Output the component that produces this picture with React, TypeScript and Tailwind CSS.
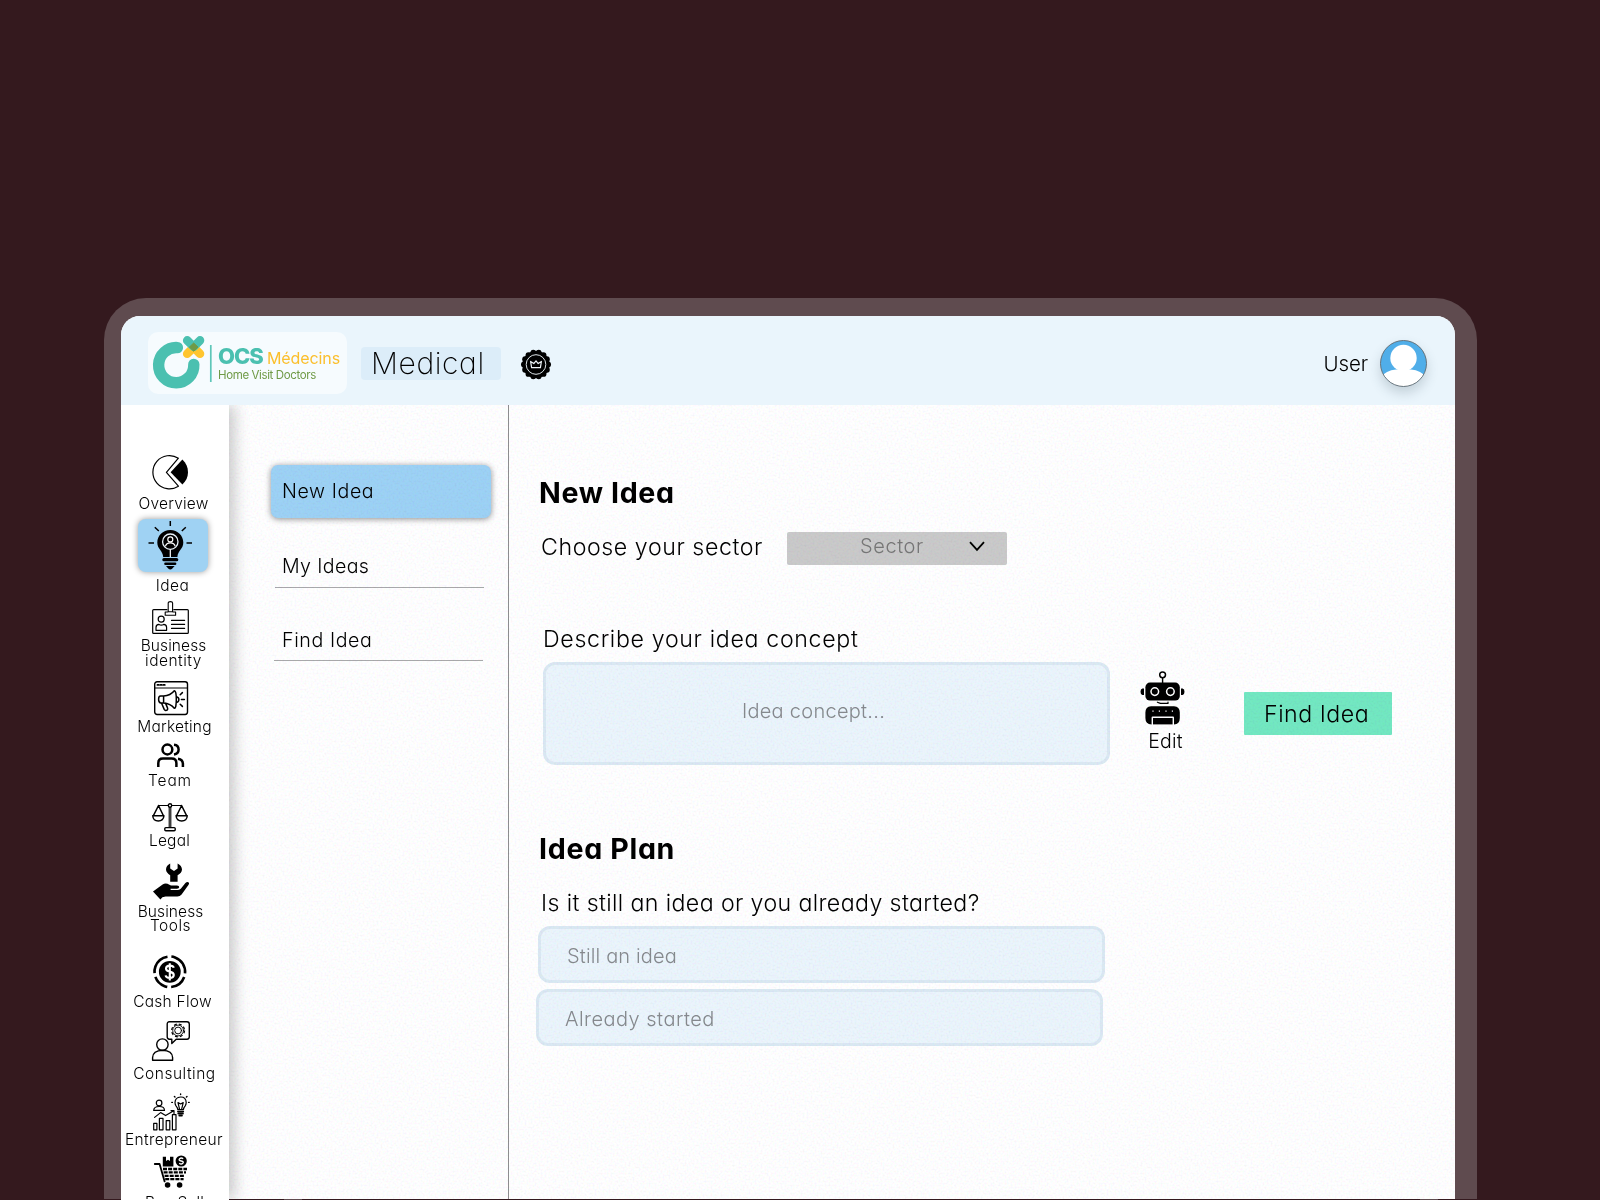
import type { ReactNode } from "react";

const line = { fill: "none", stroke: "#000", strokeWidth: 1.2, strokeLinecap: "round", strokeLinejoin: "round" } as const;

function Icon({ w, h, className = "", children }: { w: number; h: number; className?: string; children: ReactNode }) {
  return (
    <svg width={w} height={h} viewBox={`0 0 ${w} ${h}`} className={`block shrink-0 overflow-visible ${className}`}>
      {children}
    </svg>
  );
}

const PieIcon = () => (
  <Icon w={37} h={34}>
    <path {...line} d="M26.4 3.2A16.6 16.6 0 1 0 26.4 31.2L14.4 17.3Z" />
    <path d="M30.4 4.6C34 8 36 12.4 36 17.2S34 26 30.4 29.6L18.6 17.2Z" />
  </Icon>
);

const BulbIcon = () => (
  <Icon w={44} h={49} className="-translate-x-[3px]">
    <path {...line} strokeWidth={1.5} strokeLinecap="butt" d="M22.3 0V5M6.8 6.3L10.8 10M37.8 6.3L33.8 10M.5 22H6M38.5 22H44" />
    <path d="M22.3 9C14.8 9 9.3 14.7 9.3 21.6C9.3 28.3 14.8 29.6 15.2 36H29.4C29.8 29.6 35.3 28.3 35.3 21.6C35.3 14.7 29.8 9 22.3 9Z" />
    <circle cx="22.3" cy="20.7" r="7.7" fill="none" stroke="#e8f3fb" strokeWidth="1.3" />
    <circle cx="22.3" cy="18.4" r="2.5" fill="none" stroke="#fff" strokeWidth="1.2" />
    <path d="M17.4 25.3C18 22.9 20 21.8 22.3 21.8S26.6 22.9 27.2 25.3M22.3 28.5V36" fill="none" stroke="#fff" strokeWidth="1.2" />
    <rect x="14.3" y="36.9" width="16" height="3.4" rx="1.6" />
    <rect x="16.2" y="41.4" width="12.2" height="2.6" rx="1.3" />
    <path d="M18 45H26.6L24.4 47.4Q22.3 49.6 20.2 47.4Z" />
  </Icon>
);

const IdCardIcon = () => (
  <Icon w={37} h={33}>
    <path {...line} d="M15 8.7H1.6Q.7 8.7.7 9.6V31.4Q.7 32.3 1.6 32.3H35.4Q36.3 32.3 36.3 31.4V9.6Q36.3 8.7 35.4 8.7H21.8" />
    <path {...line} strokeWidth={1.1} d="M16.2 10.8V2Q16.2.6 18.4.6T20.6 2V10.8ZM15.8 11H13.2V14.3H23.6V11H21" />
    <circle {...line} cx="9.2" cy="18.2" r="3" />
    <path {...line} d="M4 29.3V26.4Q4 23.6 7 23.4Q9.2 24.8 11.6 23.4Q14.6 23.6 14.6 26.4V29.3ZM19.5 19.4H32.6M19.5 23.4H32.6M19.5 27.4H32.6" />
  </Icon>
);

const MegaphoneIcon = () => (
  <Icon w={34} h={34}>
    <rect {...line} strokeWidth={1.4} x=".7" y=".7" width="32.8" height="32.8" rx="2.4" />
    <path {...line} d="M.7 7H33.5" />
    <path d="M3.4 3.9H4.8M6.4 3.9H7.8M9.4 3.9H10.8" stroke="#000" strokeWidth="1.7" strokeLinecap="round" />
    <g {...line} strokeWidth={1.5}>
      <path d="M9.6 15H6.6Q4.6 15 4.6 18.2T6.6 22H9.6ZM9.6 15Q16.5 14.6 20.3 9.8Q22.3 9.6 22.3 18.6T20.3 27.2Q16.5 22.6 9.6 22M7.6 22.2L10.2 28.4Q11.4 30.2 13.4 28.8Q14 28 13.4 26.6L11.6 22.4M22.4 15.8Q24.9 16.2 24.9 18.6T22.4 21.4" />
      <path d="M26.2 13.8L28.4 11.6M27.4 18.6H30.4M26.2 23.2L28.4 25.4" />
    </g>
  </Icon>
);

const TeamIcon = () => (
  <Icon w={28} h={24} className="translate-x-px">
    <g {...line} strokeWidth={2.5} strokeLinecap="butt">
      <circle cx="10.4" cy="6.5" r="4.9" />
      <path d="M17 1.7C19.8 2 21.6 3.8 21.6 6.5S19.8 11 17 11.4M1.3 24V20.2Q1.3 15.6 6 15.6H14.6Q19.4 15.6 19.4 20.2V24M21 15.7Q25.9 16.4 25.9 21V24" />
    </g>
  </Icon>
);

const ScalesIcon = () => (
  <Icon w={36} h={30}>
    <g {...line} strokeWidth={1.4}>
      <circle cx="18" cy="2.5" r="1.7" />
      <path d="M16.3 2.5H6.5M19.7 2.5H29.6M17.2 4.4V24.5M18.8 4.4V24.5" strokeWidth="1.1" />
      <rect x="12.8" y="24.6" width="10.4" height="3.2" rx="1" />
      <path d="M6.5 2.6L1.4 12.6M6.5 2.6L11.4 12.6M.7 12.7H12Q11.4 18 6.3 18T.7 12.7ZM29.6 2.6L24.6 12.6M29.6 2.6L34.6 12.6M24 12.7H35.3Q34.8 18 29.7 18T24 12.7Z" />
    </g>
  </Icon>
);

const HandToolIcon = () => (
  <Icon w={36} h={36}>
    <path d="M17.2.4Q13 2.4 13 6.6Q13.2 10 17.2 12.2V18.8H24.6V12.2Q28.8 10.2 29 6.6Q28.8 2.4 24.6.4V5.6L21 8L17.2 5.6Z" />
    <path d="M0 28.6L9.6 21.4Q13 19.6 16.4 21.8L18 22.6H24Q26.4 22.8 26.2 24.2T24 25.8H17.6V27H25Q27 26.8 28 25.4L32.4 20Q34 18.4 35.4 19.2T35.6 21.8L28.6 31.4Q27 33.4 24.4 33.4H12.6L9.4 34.2L7.4 36.4Z" />
  </Icon>
);

const CashIcon = () => (
  <Icon w={34} h={34}>
    <circle cx="16.8" cy="16.8" r="10.9" />
    <circle cx="16.8" cy="16.8" r="15.3" fill="none" stroke="#000" strokeWidth="2.6" pathLength="100" strokeDasharray="18 4 17 4 24 4 25 4" transform="rotate(20 16.8 16.8)" />
    <path d="M20.8 12.8Q20.2 10.6 16.8 10.6T13 13.4Q13 15.8 16.8 16.6T20.8 20Q20.6 23 16.8 23T12.6 20.4M16.8 8.2V25.4" fill="none" stroke="#fff" strokeWidth="2.1" />
  </Icon>
);

const ConsultIcon = () => (
  <Icon w={38} h={40} className="translate-x-px">
    <g {...line} strokeWidth={1.4}>
      <path d="M17.4.8H35Q37.3.8 37.3 3.2V15.8Q37.3 18.2 35 18.2H24.2L19.8 22.6V18.2H17.4Q15.2 18.2 15.2 15.8V3.2Q15.2.8 17.4.8Z" />
      <circle cx="26.1" cy="9.5" r="6.4" strokeWidth="1.3" strokeDasharray="2.9 2.13" strokeLinecap="butt" />
      <circle cx="26.1" cy="9.5" r="5.4" strokeWidth=".9" />
      <circle cx="26.1" cy="9.5" r="3.4" strokeWidth="1" />
      <circle cx="10.4" cy="23.6" r="5.7" />
      <path d="M.6 39.3V36.6Q.8 29.6 10.6 29.4Q20.4 29.6 20.6 36.6V39.3Z" />
    </g>
  </Icon>
);

const EntrepreneurIcon = () => (
  <Icon w={36} h={37}>
    <g {...line} strokeWidth={1.2}>
      <circle cx="6.1" cy="9" r="2.8" />
      <path d="M.7 16.4Q.8 12.6 6.1 12.5T11.5 16.4ZM1.6 23.4L7.6 18.6L12.6 21.6L20.4 17M18 16.6H21V19.4M.7 29.4H3.9V35.8H.7ZM6.4 24.4H10V35.8H6.4ZM13.2 26.6H16.8V35.8H13.2ZM19.4 20.6H23V35.8H19.4Z" />
      <path d="M24.8 15.6Q24.6 13.6 23 11.8Q22 10.4 22 8.6Q22.2 3.2 27.6 3T33.2 8.6Q33.2 10.4 32.2 11.8Q30.6 13.6 30.4 15.6ZM26.6 15.4L25 8.6L27.6 10L30.2 8.6L28.6 15.4" />
      <path d="M24.9 17.6H30.3M25.2 19.6H30M26.2 21.6H29" strokeWidth="1.7" />
      <path d="M27.6 0V.6M21.4 2.4L22 3M34 2.4L33.4 3M18.8 8.4H19.4M35.6 8.4H36.2" strokeWidth="1.4" />
    </g>
  </Icon>
);

const CartIcon = () => (
  <Icon w={34} h={33}>
    <path {...line} strokeWidth={1.8} d="M.8 9H5.6L10.6 26.4" />
    <path d="M8.8 1.8H12V6L14 4.8L16 6V1.8H19.4V11.6H8.8Z" />
    <circle cx="27.2" cy="6" r="5.6" />
    <path d="M29.2 3.8Q27.2 2.2 25.6 3.8T27.2 6T28.8 8.2T25.2 8.2" fill="none" stroke="#fff" strokeWidth="1.3" />
    <path d="M9 14H33M9.6 17.4H32M10.6 20.8H31M11.2 24.2H29.6" stroke="#000" strokeWidth="2.3" strokeDasharray="4 1.1" />
    <circle cx="13.6" cy="30" r="2.8" />
    <circle cx="25.6" cy="30" r="2.8" />
  </Icon>
);

const RobotIcon = () => (
  <Icon w={45} h={54}>
    <circle {...line} strokeWidth={1.5} cx="22.6" cy="3.8" r="2.9" />
    <path {...line} strokeWidth={1.4} d="M22.6 6.8V12" />
    <rect x="5.4" y="11.6" width="34.4" height="18" rx="4.6" />
    <path d="M4 17.6V24H2.4Q.5 23.6.5 20.8T2.4 17.6ZM41 17.6V24H42.6Q44.5 23.6 44.5 20.8T42.6 17.6Z" />
    <circle cx="14.8" cy="20.6" r="3.8" fill="none" stroke="#fff" strokeWidth="1.5" />
    <circle cx="30.4" cy="20.6" r="3.8" fill="none" stroke="#fff" strokeWidth="1.5" />
    <path {...line} strokeWidth={1.2} d="M17.4 31.2L20.4 32.4H28V31" />
    <path d="M11 35.2H34Q39.8 35.4 39.8 41.6V47Q39.8 53.2 34 53.4V46.4Q34 45.4 33 45.4H12.6Q11.6 45.4 11.6 46.4V53.4Q5.4 53.2 5.4 47V41.6Q5.4 35.4 11 35.2Z" />
    <path d="M13 47H32.6V53.4H13Z" />
    <path d="M12.4 40.2H13.6M18.8 40.2H20M25.4 40.2H26.6M31.8 40.2H33" stroke="#fff" strokeWidth="1.3" />
  </Icon>
);

const LogoMark = () => (
  <Icon w={66} h={60}>
    <path d="M29.4 15.6A17.6 17.6 0 1 0 45.8 32.4" fill="none" stroke="#4bc0b0" strokeWidth="11.4" strokeLinecap="round" />
    <path d="M39.2 21.8L45.7 15.4L52 21.8" fill="none" stroke="#ffc52f" strokeWidth="8.6" strokeLinecap="round" strokeLinejoin="round" />
    <path d="M39.2 8.4L45.7 14.8L52 8.4" fill="none" stroke="#4bc0b0" strokeWidth="8.6" strokeLinecap="round" strokeLinejoin="round" />
    <path d="M45.7 11L50 15.1L45.7 19.2L41.4 15.1Z" fill="#6f9a46" stroke="#6f9a46" strokeWidth="1" strokeLinejoin="round" />
    <path d="M62.8 13V50" stroke="#5ec6b8" strokeWidth="1.7" />
  </Icon>
);

const scallops = Array.from({ length: 14 }, (_, i) => {
  const a = (i / 14) * Math.PI * 2;
  return { x: 15 + 12.1 * Math.cos(a), y: 15.5 + 12.1 * Math.sin(a) };
});

const BadgeIcon = () => (
  <Icon w={30} h={31}>
    <circle cx="15" cy="15.5" r="13.6" />
    {scallops.map((p, i) => (
      <circle key={i} cx={p.x} cy={p.y} r="2.9" />
    ))}
    <circle cx="15" cy="15.5" r="9.8" fill="none" stroke="#dfe6ea" strokeWidth="1" />
    <path d="M10.6 18.6L9.6 12.4L12.8 14.6L15 11.8L17.2 14.6L20.4 12.4L19.4 18.6Z" fill="none" stroke="#eef4f8" strokeWidth="1.2" strokeLinejoin="round" />
  </Icon>
);

const Avatar = () => (
  <Icon w={47} h={47} className="rounded-full shadow-[0_6px_12px_rgba(60,80,95,0.22)]">
    <clipPath id="face">
      <circle cx="23.5" cy="23.5" r="23" />
    </clipPath>
    <g clipPath="url(#face)">
      <rect width="47" height="47" fill="#50aee9" />
      <circle cx="23.5" cy="18" r="13.2" fill="#fff" />
      <path d="M0 47V38Q6 30.4 16 29.6H31Q41 30.4 47 38V47Z" fill="#fff" />
    </g>
    <circle cx="23.5" cy="23.5" r="23" fill="none" stroke="#5d666c" strokeWidth="0.9" />
  </Icon>
);

function NavItem({ icon, className, children }: { icon: ReactNode; className: string; children: ReactNode }) {
  return (
    <li className={`flex flex-col items-center ${className}`}>
      {icon}
      {children}
    </li>
  );
}

const label = "whitespace-nowrap text-center text-[15.5px]";

function Sidebar() {
  return (
    <nav className="relative z-10 w-[108px] shrink-0 bg-white shadow-[6px_0_14px_rgba(0,0,0,0.2)]">
      <ul className="flex w-[99px] flex-col items-center">
        <NavItem className="mt-[50px]" icon={<PieIcon />}>
          <span className={`${label} mt-[7px] pl-[6px] leading-[15px] tracking-[0.2px]`}>Overview</span>
        </NavItem>
        <NavItem
          className="mt-2"
          icon={
            <span className="ml-[4px] flex h-[53px] w-[70px] items-center justify-center rounded-lg bg-[#9fd2f3] pb-[1px] shadow-[0_0_6px_rgba(0,0,0,0.4)]">
              <BulbIcon />
            </span>
          }
        >
          <span className={`${label} mt-[6px] pl-[4px] leading-[15px] tracking-[0.4px]`}>Idea</span>
        </NavItem>
        <NavItem className="mt-[8px]" icon={<IdCardIcon />}>
          <span className={`${label} mt-[4px] pl-[6px] leading-[15px] tracking-[0.1px]`}>
            Business
            <br />
            <span className="tracking-[0.5px]">identity</span>
          </span>
        </NavItem>
        <NavItem className="mt-[13px]" icon={<MegaphoneIcon />}>
          <span className={`${label} mt-[4px] pl-[8px] leading-[15px] tracking-[0.2px]`}>Marketing</span>
        </NavItem>
        <NavItem className="-ml-px mt-[9px]" icon={<TeamIcon />}>
          <span className={`${label} mt-[6px] leading-[15px] tracking-[0.9px]`}>Team</span>
        </NavItem>
        <NavItem className="-ml-[2px] mt-[15px]" icon={<ScalesIcon />}>
          <span className={`${label} leading-[15px] tracking-[0.2px]`}>Legal</span>
        </NavItem>
        <NavItem className="mt-[15px]" icon={<HandToolIcon />}>
          <span className={`${label} mt-[6px] leading-[14px] tracking-[0.1px]`}>
            Business
            <br />
            <span className="tracking-[0.5px]">Tools</span>
          </span>
        </NavItem>
        <NavItem className="mt-[22px]" icon={<CashIcon />}>
          <span className={`${label} mt-[5px] pl-[4px] leading-[15px] tracking-[0.25px]`}>Cash Flow</span>
        </NavItem>
        <NavItem className="mt-[12px]" icon={<ConsultIcon />}>
          <span className={`${label} mt-[5px] pl-[8px] leading-[15px] tracking-[0.5px]`}>Consulting</span>
        </NavItem>
        <NavItem className="mt-[13px]" icon={<EntrepreneurIcon />}>
          <span className={`${label} mt-[1px] pl-[7px] leading-[15px] tracking-[0.35px]`}>Entrepreneur</span>
        </NavItem>
        <NavItem className="mt-[8px]" icon={<CartIcon />}>
          <span className={`${label} mt-[7px] pl-[8px] leading-[15px] tracking-[0.1px]`}>Buy Sell</span>
        </NavItem>
      </ul>
    </nav>
  );
}

function Header() {
  return (
    <header className="flex h-[89px] shrink-0 items-center bg-[#eaf5fc] pl-[27px] pr-[28px]">
      <div className="mt-[5px] flex h-[62px] w-[199px] rounded-[10px] bg-[#f6fbfe]">
        <LogoMark />
        <div className="flex flex-col pl-[4px] pt-[13px]">
          <div className="flex h-[22px] items-center whitespace-nowrap">
            <span className="w-[49px] text-[22px] font-extrabold leading-none tracking-[-1.1px] text-[#4bc0b0]">OCS</span>
            <span className="mt-[3px] text-[16px] font-normal leading-none tracking-[-0.1px] text-[#fbbf2d]">Médecins</span>
          </div>
          <span className="mt-[1px] whitespace-nowrap text-[11.5px] font-normal leading-[14px] tracking-[-0.38px] text-[#6f9a46]">Home Visit Doctors</span>
        </div>
      </div>
      <div className="ml-[14px] mt-[6px] flex h-[33px] w-[140px] items-center rounded-[4px] bg-[#dcedf9] pl-[10px]">
        <span className="-mt-px text-[30px] font-extralight leading-none tracking-[0.6px]">Medical</span>
      </div>
      <div className="ml-[20px] mt-[8px]">
        <BadgeIcon />
      </div>
      <div className="ml-auto mt-[6px] flex items-center gap-[12px]">
        <span className="mt-px text-[20.5px] leading-none tracking-[-0.1px]">User</span>
        <Avatar />
      </div>
    </header>
  );
}

function IdeaMenu() {
  return (
    <div className="flex w-[279px] shrink-0 flex-col pl-[42px]">
      <div className="mt-[60px] flex h-[53px] w-[220px] items-center rounded-[7px] bg-[#9dd2f5] pl-[11px] shadow-[0_1px_6px_rgba(0,0,0,0.45)]">
        <span className="text-[19.6px] leading-none tracking-[0.6px]">New Idea</span>
      </div>
      <div className="ml-[4px] mt-[32px] flex h-[38px] w-[209px] border-b border-[#a9a9ab] pl-[7px]">
        <span className="text-[19.6px] leading-[32px] tracking-[0.37px]">My Ideas</span>
      </div>
      <div className="ml-[3px] mt-[35px] flex h-[38px] w-[209px] border-b border-[#a9a9ab] pl-[8px]">
        <span className="text-[19.6px] leading-[34px] tracking-[0.6px]">Find Idea</span>
      </div>
    </div>
  );
}

function IdeaForm() {
  return (
    <main className="flex min-w-0 flex-1 flex-col border-l border-[#8e8e90] pl-[28px]">
      <h2 className="ml-[2px] mt-[72px] text-[28.6px] font-bold leading-[32px] tracking-[0.62px]">New Idea</h2>
      <div className="mt-[23px] flex h-[33px] items-center">
        <span className="-mt-[2px] ml-[4px] w-[246px] text-[23.2px] leading-[33px] tracking-[0.56px]">Choose your sector</span>
        <button className="flex h-[33px] w-[220px] items-center rounded-[2px] bg-[#cacaca] pl-[73px] pr-[22px]">
          <span className="-mt-[6px] text-[20px] leading-none tracking-[0.6px] text-[#777]">Sector</span>
          <svg width="16" height="11" viewBox="0 0 16 11" className="-mt-[4px] ml-auto">
            <path d="M1 1.2L8 8.8L15 1.2" fill="none" stroke="#000" strokeWidth="1.8" />
          </svg>
        </button>
      </div>
      <span className="ml-[6px] mt-[58px] text-[23.2px] leading-[32px] tracking-[0.65px]">Describe your idea concept</span>
      <div className="mt-[7px] flex">
        <div className="ml-[6px] flex h-[103px] w-[567px] justify-center rounded-xl border-3 border-[#dbe9f3] bg-[#ebf5fc] pr-[26px] pt-[33px]">
          <span className="text-[20px] leading-[26px] tracking-[0.27px] text-[#868a8e]">Idea concept...</span>
        </div>
        <div className="ml-[29px] flex w-[46px] flex-col items-center pt-[9px]">
          <RobotIcon />
          <span className="ml-[7px] mt-[5px] text-[19.5px] leading-[22px] tracking-[0.2px]">Edit</span>
        </div>
        <button className="ml-[59px] mt-[30px] flex h-[43px] w-[148px] items-center rounded-[1px] bg-[#73e8c2] pl-[20px] pt-[2px] text-[23.2px] leading-none tracking-[0.5px]">
          Find Idea
        </button>
      </div>
      <h2 className="ml-[2px] mt-[68px] text-[28.6px] font-bold leading-[32px] tracking-[0.68px]">Idea Plan</h2>
      <span className="ml-[4px] mt-[22px] text-[23.2px] leading-[32px] tracking-[0.37px]">Is it still an idea or you already started?</span>
      <div className="ml-[1px] mt-[7px] flex h-[57px] w-[567px] items-center rounded-xl border-3 border-[#dbe9f3] bg-[#ebf5fc] pl-[26px] pt-[2px]">
        <span className="text-[20px] leading-none tracking-[0.15px] text-[#868a8e]">Still an idea</span>
      </div>
      <div className="-ml-[1px] mt-[6px] flex h-[57px] w-[567px] items-center rounded-xl border-3 border-[#dbe9f3] bg-[#ebf5fc] pl-[26px] pt-[2px]">
        <span className="text-[20px] leading-none tracking-[0.48px] text-[#868a8e]">Already started</span>
      </div>
    </main>
  );
}

/* Fine paper grain over the workspace */
function Grain() {
  return (
    <svg className="pointer-events-none absolute inset-0 h-full w-full opacity-[0.04] mix-blend-multiply" aria-hidden="true">
      <filter id="grain" x="0" y="0" width="100%" height="100%" colorInterpolationFilters="sRGB">
        <feTurbulence type="fractalNoise" baseFrequency="0.5" numOctaves="2" seed="4" />
        <feColorMatrix values="3 0 0 0 -0.75  0 3 0 0 -0.75  0 0 3 0 -0.65  0 0 0 0 1" />
      </filter>
      <rect width="100%" height="100%" filter="url(#grain)" />
    </svg>
  );
}

export default function App() {
  return (
    <div className="h-[1200px] w-[1600px] overflow-hidden bg-[#34191e] pl-[104px] pt-[298px] font-['Inter',sans-serif] font-light text-black [font-feature-settings:'cv11']">
      <div className="h-[901px] w-[1373px] overflow-hidden rounded-t-[42px] bg-[#5f4b4f] pl-[17px] pr-[22px] pt-[18px]">
        <div className="flex h-[883px] flex-col overflow-hidden rounded-t-[19px] bg-white">
          <Header />
          <div className="flex min-h-0 flex-1 overflow-hidden">
            <Sidebar />
            <div className="relative flex flex-1 bg-white">
              <IdeaMenu />
              <IdeaForm />
              <Grain />
            </div>
          </div>
        </div>
      </div>
      <div className="flex h-px">
        <div className="ml-[17px] w-[108px] bg-white" />
        <div className="ml-[55px] w-[18px] bg-[#5f4b4f]" />
        <div className="ml-[1118px] w-[18px] bg-[#5f4b4f]" />
      </div>
    </div>
  );
}
